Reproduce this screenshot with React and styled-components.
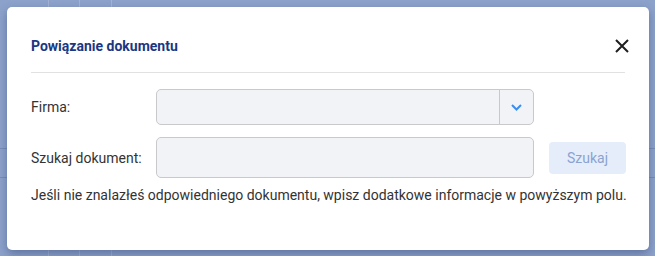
import styled, { createGlobalStyle } from 'styled-components';

const GlobalStyle = createGlobalStyle`
  html, body {
    margin: 0;
    padding: 0;
    width: 655px;
    height: 256px;
    overflow: hidden;
    font-family: Roboto, "Liberation Sans", Arial, sans-serif;
  }
`;

// Page behind the dialog (dimmed table)
const Backdrop = styled.div`
  width: 655px;
  height: 256px;
  box-sizing: border-box;
  padding: 7px 6px 6px 7px;
  background-color: #8da2ca;
  background-image:
    linear-gradient(90deg, transparent 48px, rgba(255, 255, 255, 0.18) 48px, rgba(255, 255, 255, 0.18) 49px, transparent 49px),
    linear-gradient(90deg, transparent 79px, rgba(255, 255, 255, 0.18) 79px, rgba(255, 255, 255, 0.18) 80px, transparent 80px),
    linear-gradient(90deg, transparent 111px, rgba(255, 255, 255, 0.18) 111px, rgba(255, 255, 255, 0.18) 112px, transparent 112px),
    linear-gradient(180deg, transparent 148px, rgba(80, 100, 150, 0.35) 148px, rgba(80, 100, 150, 0.35) 149px, transparent 149px),
    linear-gradient(180deg, transparent 177px, rgba(80, 100, 150, 0.35) 177px, rgba(80, 100, 150, 0.35) 178px, transparent 178px);
`;

const Modal = styled.div`
  width: 642px;
  height: 243px;
  box-sizing: border-box;
  padding: 24px 24px 0 24px;
  background: #fff;
  border-radius: 5px;
  box-shadow: 0 4px 10px rgba(40, 60, 110, 0.45);
`;

const Header = styled.div`
  display: flex;
  align-items: center;
  justify-content: space-between;
  height: 30px;
  padding-bottom: 11px;
  border-bottom: 1px solid #e1e1e1;
`;

const Title = styled.h2`
  margin: 0;
  font-size: 14px;
  font-weight: 700;
  color: #1b3781;
`;

const CloseButton = styled.button`
  display: flex;
  align-items: center;
  justify-content: center;
  width: 20px;
  height: 20px;
  padding: 0;
  margin-right: -7px;
  border: none;
  background: none;
  cursor: pointer;
`;

const Body = styled.div`
  display: flex;
  flex-direction: column;
  padding-top: 16px;
`;

const Row = styled.div`
  display: grid;
  grid-template-columns: 110px 378px 77px;
  column-gap: 15px;
  align-items: center;
  margin-bottom: ${(p) => p.$gap}px;
`;

const Label = styled.label`
  font-size: 14px;
  color: #333;
  white-space: nowrap;
`;

const Select = styled.div`
  display: flex;
  height: 36px;
  box-sizing: border-box;
  border: 1px solid #c9c9cc;
  border-radius: 5px;
  background: #f2f3f7;
  overflow: hidden;
`;

const SelectValue = styled.div`
  flex: 1;
`;

const SelectToggle = styled.div`
  display: flex;
  align-items: center;
  justify-content: center;
  width: 33px;
  border-left: 1px solid #c9c9cc;
`;

const Input = styled.input`
  height: 41px;
  box-sizing: border-box;
  border: 1px solid #c9c9cc;
  border-radius: 5px;
  background: #f2f3f7;
  outline: none;
`;

const SearchButton = styled.button`
  height: 32px;
  padding: 0;
  border: none;
  border-radius: 4px;
  background: #e5edfb;
  color: #8aa3cf;
  font-family: inherit;
  font-size: 14px;
  cursor: default;
`;

const Hint = styled.p`
  margin: 0;
  font-size: 14px;
  line-height: 18px;
  color: #333;
  white-space: nowrap;
`;

const App = () => (
  <>
    <GlobalStyle />
    <Backdrop>
      <Modal>
        <Header>
          <Title>Powiązanie dokumentu</Title>
          <CloseButton aria-label='Zamknij'>
            <svg width='14' height='14' viewBox='0 0 14 14'>
              <path d='M1 1 L13 13 M13 1 L1 13' stroke='#1f1f1f' strokeWidth='2' />
            </svg>
          </CloseButton>
        </Header>

        <Body>
          <Row $gap={12}>
            <Label>Firma:</Label>
            <Select>
              <SelectValue />
              <SelectToggle>
                <svg width='11' height='7' viewBox='0 0 11 7'>
                  <path d='M1 1 L5.5 5.5 L10 1' fill='none' stroke='#3b8df0' strokeWidth='2' />
                </svg>
              </SelectToggle>
            </Select>
          </Row>

          <Row $gap={8}>
            <Label>Szukaj dokument:</Label>
            <Input />
            <SearchButton>Szukaj</SearchButton>
          </Row>

          <Hint>Jeśli nie znalazłeś odpowiedniego dokumentu, wpisz dodatkowe informacje w powyższym polu.</Hint>
        </Body>
      </Modal>
    </Backdrop>
  </>
);

export default App;
